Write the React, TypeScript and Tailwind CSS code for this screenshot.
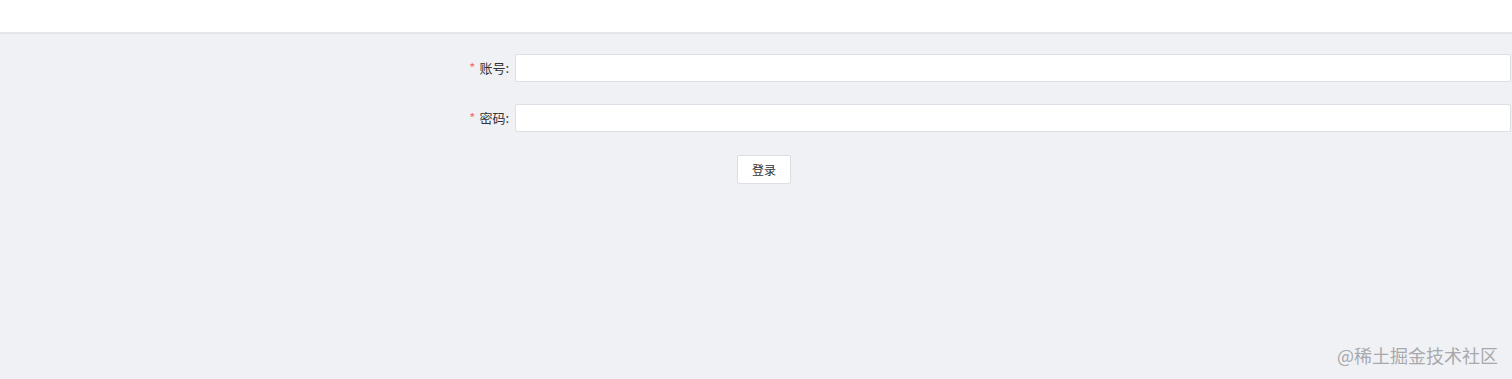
export default function App() {
  const font = { fontFamily: '"Microsoft YaHei", "Noto Sans CJK SC", sans-serif' };
  return (
    <div className="h-[379px] w-[1512px] flex flex-col bg-[#f0f1f5] overflow-hidden" style={font}>
      <div className="h-[32px] bg-white shrink-0" />
      <div className="h-[2px] bg-[#e5e6ea] shrink-0" />
      <div className="relative flex-1 flex flex-col pt-[20px] pr-[1px]">
        <div className="flex items-center h-[28px]">
          <label className="w-[515px] pr-[6px] text-right text-[13px] text-[#333]">
            <span className="text-[#f56c6c] mr-[4px]">*</span>账号:
          </label>
          <input className="flex-1 h-[28px] bg-white border border-[#dcdfe6] rounded-[2px] outline-none px-2 text-[12px]" />
        </div>
        <div className="flex items-center h-[28px] mt-[22px]">
          <label className="w-[515px] pr-[6px] text-right text-[13px] text-[#333]">
            <span className="text-[#f56c6c] mr-[4px]">*</span>密码:
          </label>
          <input type="password" className="flex-1 h-[28px] bg-white border border-[#dcdfe6] rounded-[2px] outline-none px-2 text-[12px]" />
        </div>
        <div className="flex mt-[23px] pl-[737px]">
          <button className="w-[54px] h-[29px] bg-white border border-[#dcdfe6] rounded-[2px] text-[12px] text-[#333]">
            登录
          </button>
        </div>
        <div className="absolute right-[14px] bottom-[14px] text-[18px] leading-[20px] text-[#a7a9ad]">
          @稀土掘金技术社区
        </div>
      </div>
    </div>
  );
}
